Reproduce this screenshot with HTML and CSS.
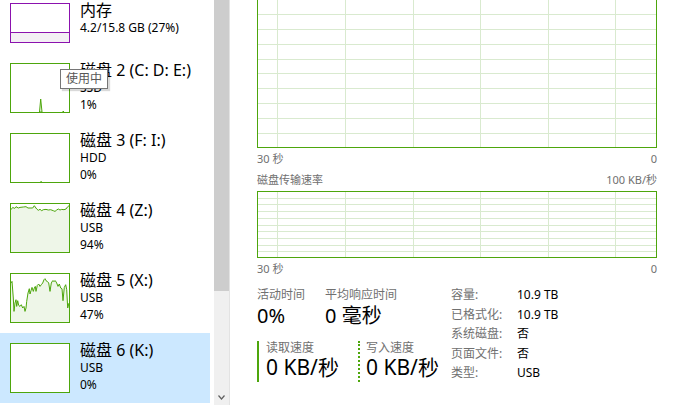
FILE: index.html
```html
<!DOCTYPE html>
<html lang="zh-CN">
<head>
  <meta charset="UTF-8">
  <title>性能 - 磁盘 6</title>
  <link rel="stylesheet" href="styles.css">
</head>
<body>
  <div class="app">
    <div class="sidebar">
      <div class="item mem">
        <div class="thumb thumb-mem"><div class="mem-fill"></div></div>
        <div class="info">
          <div class="name">内存</div>
          <div class="sub">4.2/15.8 GB (27%)</div>
        </div>
      </div>
      <div class="item">
        <div class="thumb">
          <svg viewBox="0 0 58 48">
            <path d="M28.5,48 L29.7,35 L31,48 Z" fill="#eef6e8" stroke="#4da60c"/>
            <path d="M51.5,47.5 h1.5" stroke="#4da60c"/>
          </svg>
        </div>
        <div class="info">
          <div class="name">磁盘 2 (C: D: E:)</div>
          <div class="sub">SSD</div>
          <div class="sub">1%</div>
        </div>
      </div>
      <div class="item">
        <div class="thumb">
          <svg viewBox="0 0 58 48">
            <path d="M29.5,47.5 h1.2" stroke="#4da60c"/>
          </svg>
        </div>
        <div class="info">
          <div class="name">磁盘 3 (F: I:)</div>
          <div class="sub">HDD</div>
          <div class="sub">0%</div>
        </div>
      </div>
      <div class="item">
        <div class="thumb">
          <svg viewBox="0 0 58 48">
            <polygon fill="#eef6e8" points="0,5.7 1.7,3.4 3.7,4.4 5,2.7 7.3,4 9,3.4 12.3,3 15,2.7 17,4 21.7,4 23.3,1.7 25.7,5 27.3,6.3 29,5.3 30.7,6.7 32.3,5.7 35,5.4 37.3,6 39.7,5.7 42.3,6.7 44,7.4 45.7,6 47.3,5 49,6 50.7,5.4 53,5.7 55,5 56.7,2.7 58,1.7 58,48 0,48"/>
            <polyline fill="none" stroke="#4da60c" points="0,5.7 1.7,3.4 3.7,4.4 5,2.7 7.3,4 9,3.4 12.3,3 15,2.7 17,4 21.7,4 23.3,1.7 25.7,5 27.3,6.3 29,5.3 30.7,6.7 32.3,5.7 35,5.4 37.3,6 39.7,5.7 42.3,6.7 44,7.4 45.7,6 47.3,5 49,6 50.7,5.4 53,5.7 55,5 56.7,2.7 58,1.7"/>
          </svg>
        </div>
        <div class="info">
          <div class="name">磁盘 4 (Z:)</div>
          <div class="sub">USB</div>
          <div class="sub">94%</div>
        </div>
      </div>
      <div class="item">
        <div class="thumb">
          <svg viewBox="0 0 58 48">
            <polygon fill="#eef6e8" points="0,9 1,7.4 2.3,24 3,37.4 4,29 5,25.7 5.7,32.4 6.7,26.7 7.7,31.4 9,32.4 10.3,30.7 11.7,34 13,32.4 14,37.4 15,34 15.7,27.4 17,19 18.3,14.7 19,20 20,16.7 21,13.4 22.3,17.4 23.3,14 24.3,12.4 25,17.4 26.3,11.4 27.7,10 29,12.4 30.3,10.7 31.7,9 33,5.7 34,4.7 35,6.7 36.3,7.4 37.7,9 39,17.4 40.3,9 41.7,6.7 43,7.4 44.3,6.7 45.7,9 47,12.4 48.3,10 49.7,14 51,14.7 52,26.7 53.3,13.4 54.7,10.7 55.7,15.7 56.7,34 58,29 58,48 0,48"/>
            <polyline fill="none" stroke="#4da60c" points="0,9 1,7.4 2.3,24 3,37.4 4,29 5,25.7 5.7,32.4 6.7,26.7 7.7,31.4 9,32.4 10.3,30.7 11.7,34 13,32.4 14,37.4 15,34 15.7,27.4 17,19 18.3,14.7 19,20 20,16.7 21,13.4 22.3,17.4 23.3,14 24.3,12.4 25,17.4 26.3,11.4 27.7,10 29,12.4 30.3,10.7 31.7,9 33,5.7 34,4.7 35,6.7 36.3,7.4 37.7,9 39,17.4 40.3,9 41.7,6.7 43,7.4 44.3,6.7 45.7,9 47,12.4 48.3,10 49.7,14 51,14.7 52,26.7 53.3,13.4 54.7,10.7 55.7,15.7 56.7,34 58,29"/>
          </svg>
        </div>
        <div class="info">
          <div class="name">磁盘 5 (X:)</div>
          <div class="sub">USB</div>
          <div class="sub">47%</div>
        </div>
      </div>
      <div class="item active">
        <div class="thumb"></div>
        <div class="info">
          <div class="name">磁盘 6 (K:)</div>
          <div class="sub">USB</div>
          <div class="sub">0%</div>
        </div>
      </div>
    </div>

    <div class="scrollbar">
      <div class="scroll-thumb"></div>
      <svg class="scroll-down" width="7" height="5" viewBox="0 0 7 5">
        <polyline points="0.5,0.5 3.5,4 6.5,0.5" fill="none" stroke="#606060" stroke-width="1.2"/>
      </svg>
    </div>

    <div class="detail">
      <svg class="graph" width="400" height="148" shape-rendering="crispEdges">
        <g stroke="#d9eacf">
          <path d="M0,14.5H400 M0,29.5H400 M0,44.5H400 M0,59.5H400 M0,73.5H400 M0,88.5H400 M0,103.5H400 M0,118.5H400 M0,133.5H400"/>
          <path d="M20.5,0V148 M88.5,0V148 M156.5,0V148 M223.5,0V148 M291.5,0V148 M358.5,0V148"/>
        </g>
        <path d="M0.5,0V147.5H399.5V0" fill="none" stroke="#4da60c"/>
      </svg>
      <div class="axis"><span>30 秒</span><span>0</span></div>

      <div class="caption"><span>磁盘传输速率</span><span>100 KB/秒</span></div>
      <svg class="graph graph-small" width="400" height="67" shape-rendering="crispEdges">
        <g stroke="#d9eacf">
          <path d="M0,7.5H400 M0,13.5H400 M0,20.5H400 M0,27.5H400 M0,34.5H400 M0,40.5H400 M0,47.5H400 M0,54.5H400 M0,60.5H400"/>
          <path d="M20.5,0V67 M88.5,0V67 M156.5,0V67 M223.5,0V67 M291.5,0V67 M358.5,0V67"/>
        </g>
        <rect x="0.5" y="0.5" width="399" height="66" fill="none" stroke="#4da60c"/>
      </svg>
      <div class="axis"><span>30 秒</span><span>0</span></div>

      <div class="stats">
        <div class="stats-left">
          <div class="row">
            <div class="metric">
              <div class="label">活动时间</div>
              <div class="value">0%</div>
            </div>
            <div class="metric">
              <div class="label">平均响应时间</div>
              <div class="value">0 毫秒</div>
            </div>
          </div>
          <div class="row speeds">
            <div class="speed read">
              <div class="label">读取速度</div>
              <div class="value">0 KB/秒</div>
            </div>
            <div class="speed write">
              <div class="label">写入速度</div>
              <div class="value">0 KB/秒</div>
            </div>
          </div>
        </div>
        <div class="props">
          <span class="key">容量:</span><span>10.9 TB</span>
          <span class="key">已格式化:</span><span>10.9 TB</span>
          <span class="key">系统磁盘:</span><span>否</span>
          <span class="key">页面文件:</span><span>否</span>
          <span class="key">类型:</span><span>USB</span>
        </div>
      </div>
    </div>
  </div>

  <div class="tooltip">使用中</div>
</body>
</html>
```

FILE: styles.css
```css
body{
  margin: 0;
  color: #000;
  background: #fff;
  font-family: "Segoe UI", "Noto Sans", "Noto Sans CJK SC", sans-serif;
  overflow: hidden;
}
.app{
  display: flex;
  height: 415px;
}

/* left list */
.sidebar{
  width: 210px;
  flex: none;
}
.item{
  display: flex;
  align-items: flex-start;
  height: 70px;
  padding: 10px 0 0 10px;
  box-sizing: border-box;
}
.item.mem{
  height: 60px;
  margin-top: -7px;
}
.item.active{
  background: #cce8ff;
}
.thumb{
  width: 60px;
  height: 50px;
  flex: none;
  box-sizing: border-box;
  border: 1px solid #4da60c;
  background: #fff;
}
.thumb svg{
  display: block;
  width: 58px;
  height: 48px;
}
.thumb-mem{
  height: 40px;
  border-color: #8b12ae;
  display: flex;
  flex-direction: column;
  justify-content: flex-end;
}
.mem-fill{
  height: 10px;
  box-sizing: border-box;
  border-top: 1px solid #8b12ae;
  background: #f3eff4;
}
.info{
  margin: -2px 0 0 10px;
  white-space: nowrap;
}
.name{
  font-size: 16px;
  line-height: 18px;
}
.sub{
  font-size: 12px;
  line-height: 17px;
}

/* fake scrollbar */
.scrollbar{
  width: 15px;
  height: 405px;
  margin-left: 4px;
  flex: none;
  display: flex;
  flex-direction: column;
  background: #f0f0f0;
  border-right: 1px solid #e3e3e3;
}
.scroll-thumb{
  height: 291px;
  background: #cdcdcd;
}
.scroll-down{
  display: block;
  margin: auto auto 5px;
}

/* right detail */
.detail{
  width: 400px;
  padding-left: 27px;
}
.graph{
  display: block;
}
.axis,.caption{
  display: flex;
  justify-content: space-between;
  font-size: 11px;
  line-height: 14px;
  color: #707070;
}
.axis{
  margin-top: 4px;
}
.caption{
  margin-top: 7px;
}
.graph-small{
  margin-top: 4px;
}

.stats{
  display: flex;
  margin-top: 11px;
}
.stats-left{
  width: 194px;
}
.row{
  display: flex;
}
.metric:first-child{
  width: 68px;
}
.label{
  font-size: 12px;
  line-height: 16px;
  color: #707070;
}
.value{
  font-size: 20px;
  line-height: 24px;
  margin-top: 1px;
}
.speeds{
  margin-top: 13px;
}
.speed{
  height: 41px;
  box-sizing: border-box;
  border-left: 2px solid #4da60c;
}
.speed .label{
  line-height: 14px;
}
.speed .value{
  margin-top: 0;
  font-size: 21px;
  line-height: 25px;
}
.read{
  width: 101px;
  padding-left: 7px;
}
.write{
  padding-left: 6px;
  border-left-style: dotted;
}

.props{
  display: grid;
  grid-template-columns: 66px auto;
  align-content: start;
  margin-top: -2px;
  font-size: 12px;
  line-height: 19.5px;
  white-space: nowrap;
}
.key{
  color: #707070;
}

.tooltip{
  position: absolute;
  left: 60px;
  top: 69px;
  padding: 0 5px;
  border: 1px solid #767676;
  background: #fff;
  color: #575757;
  font-size: 12px;
  line-height: 18px;
  box-shadow: 2px 2px 1px rgba(0,0,0,.15);
}
```
